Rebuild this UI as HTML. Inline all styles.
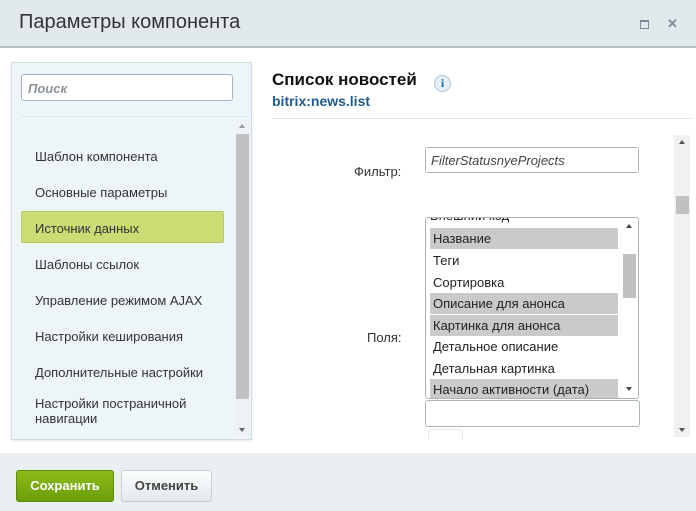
<!DOCTYPE html>
<html><head><meta charset="utf-8"><style>
*{box-sizing:border-box;margin:0;padding:0}
body{width:696px;height:511px;overflow:hidden;font-family:"Liberation Sans",Arial,sans-serif;background:#fff;position:relative;color:#222}
.a{position:absolute}
.hdr{left:0;top:0;width:696px;height:48px;background:#e1e9ec;border-bottom:2px solid #b9c0c3}
.hdr h1{position:absolute;left:19px;top:11px;font-size:20px;font-weight:normal;color:#333}
.ft{left:0;top:453px;width:696px;height:58px;background:#eaf0f2}
.lp{left:11px;top:62px;width:241px;height:378px;background:#eef5f8;border:1px solid #cfdde2;box-shadow:0 1px 2px rgba(0,0,0,.1)}
.mi{position:absolute;left:35px;font-size:13px;color:#333}
.lb{position:absolute;left:430px;width:188px;height:21px;font-size:13px;line-height:21px;padding-left:3px;color:#222}
.sel{background:#cacaca}
</style></head><body>
<div class="a hdr"><h1>Параметры компонента</h1>
<div class="a" style="left:640px;top:20px;width:9px;height:9px;border:1.5px solid #7d8a9c;border-top-width:2.5px"></div>
<div class="a" style="left:667px;top:16px;font-size:13px;color:#7d8a9c;font-weight:bold">✕</div>
</div>
<div class="a lp"></div>
<div class="a" style="left:21px;top:74px;width:212px;height:27px;border:1px solid #a9b4bb;border-radius:3px;background:#fff;font-size:13px;font-style:italic;font-weight:bold;color:#8a9399;padding:6px 6px">Поиск</div>
<div class="a" style="left:21px;top:116px;width:229px;height:1px;background:#dde7eb"></div>
<div class="a" style="left:236px;top:120px;width:14px;height:318px;background:#eef2f4"></div>
<div class="a" style="left:236px;top:134px;width:13px;height:265px;background:#c1c1c1"></div>
<div class="a" style="left:239px;top:124px;border:3.5px solid transparent;border-bottom:4px solid #999;border-top:0"></div>
<div class="a" style="left:239px;top:428px;border:3.5px solid transparent;border-top:4px solid #666;border-bottom:0"></div>
<div class="a" style="left:21px;top:211px;width:203px;height:32px;background:#cbdc74;border:1px solid #b8cb5c;border-radius:2px"></div>
<div class="mi" style="top:149px">Шаблон компонента</div>
<div class="mi" style="top:185px">Основные параметры</div>
<div class="mi" style="top:221px">Источник данных</div>
<div class="mi" style="top:257px">Шаблоны ссылок</div>
<div class="mi" style="top:293px">Управление режимом AJAX</div>
<div class="mi" style="top:329px">Настройки кеширования</div>
<div class="mi" style="top:365px">Дополнительные настройки</div>
<div class="mi" style="top:396px;line-height:15px">Настройки постраничной<br>навигации</div>

<div class="a" style="left:272px;top:70px;font-size:17px;font-weight:bold;color:#111">Список новостей</div>
<div class="a" style="left:434px;top:75px;width:17px;height:17px;border-radius:50%;background:#e4eef7;border:1px solid #b7c8d8;color:#2a6cb3;font:bold 12px 'Liberation Serif',serif;text-align:center;line-height:15px">i</div>
<div class="a" style="left:272px;top:93px;font-size:14px;font-weight:bold;color:#1f5b8f">bitrix:news.list</div>
<div class="a" style="left:272px;top:118px;width:420px;height:1px;background:#e1e5e7"></div>

<div class="a" style="left:674px;top:135px;width:16px;height:302px;background:#f1f1f1"></div>
<div class="a" style="left:676px;top:196px;width:13px;height:18px;background:#c1c1c1"></div>
<div class="a" style="left:679px;top:140px;border:3.5px solid transparent;border-bottom:4px solid #555;border-top:0"></div>
<div class="a" style="left:679px;top:428px;border:3.5px solid transparent;border-top:4px solid #555;border-bottom:0"></div>

<div class="a" style="left:354px;top:164px;font-size:13px;color:#333">Фильтр:</div>
<div class="a" style="left:425px;top:147px;width:214px;height:26px;border:1px solid #a9b4bb;border-radius:3px;font-size:13px;font-style:italic;color:#444;padding:5px 5px">FilterStatusnyeProjects</div>

<div class="a" style="left:367px;top:330px;font-size:13px;color:#333">Поля:</div>
<div class="a" style="left:425px;top:217px;width:214px;height:182px;border:1px solid #a9b4bb;border-radius:3px;overflow:hidden">
<div class="a" style="left:4px;top:-10px;font-size:13px;width:180px">Внешний код</div>
</div>
<div class="lb sel" style="top:228px">Название</div>
<div class="lb" style="top:250px">Теги</div>
<div class="lb" style="top:272px">Сортировка</div>
<div class="lb sel" style="top:293px">Описание для анонса</div>
<div class="lb sel" style="top:315px">Картинка для анонса</div>
<div class="lb" style="top:336px">Детальное описание</div>
<div class="lb" style="top:358px">Детальная картинка</div>
<div class="lb sel" style="top:379px;height:19px">Начало активности (дата)</div>
<div class="a" style="left:623px;top:254px;width:13px;height:44px;background:#c1c1c1"></div>
<div class="a" style="left:626px;top:224px;border:3.5px solid transparent;border-bottom:4px solid #444;border-top:0"></div>
<div class="a" style="left:626px;top:387px;border:3.5px solid transparent;border-top:4px solid #444;border-bottom:0"></div>
<div class="a" style="left:425px;top:400px;width:215px;height:27px;border:1px solid #a9b4bb;border-radius:3px"></div>
<div class="a" style="left:428px;top:429px;width:35px;height:10px;border:1px solid #e3e7ea;border-bottom:0;border-radius:4px 4px 0 0"></div>

<div class="a ft"></div>
<div class="a" style="left:16px;top:470px;width:98px;height:32px;border-radius:3px;background:linear-gradient(#8fbb1a,#6a9e08);border:1px solid #5e8b0c;color:#fff;font-size:13px;font-weight:bold;text-align:center;line-height:30px">Сохранить</div>
<div class="a" style="left:121px;top:470px;width:91px;height:32px;border-radius:3px;background:linear-gradient(#fdfefe,#e2e9ec);border:1px solid #c6cfd3;color:#444;font-size:13px;font-weight:bold;text-align:center;line-height:30px">Отменить</div>
</body></html>
